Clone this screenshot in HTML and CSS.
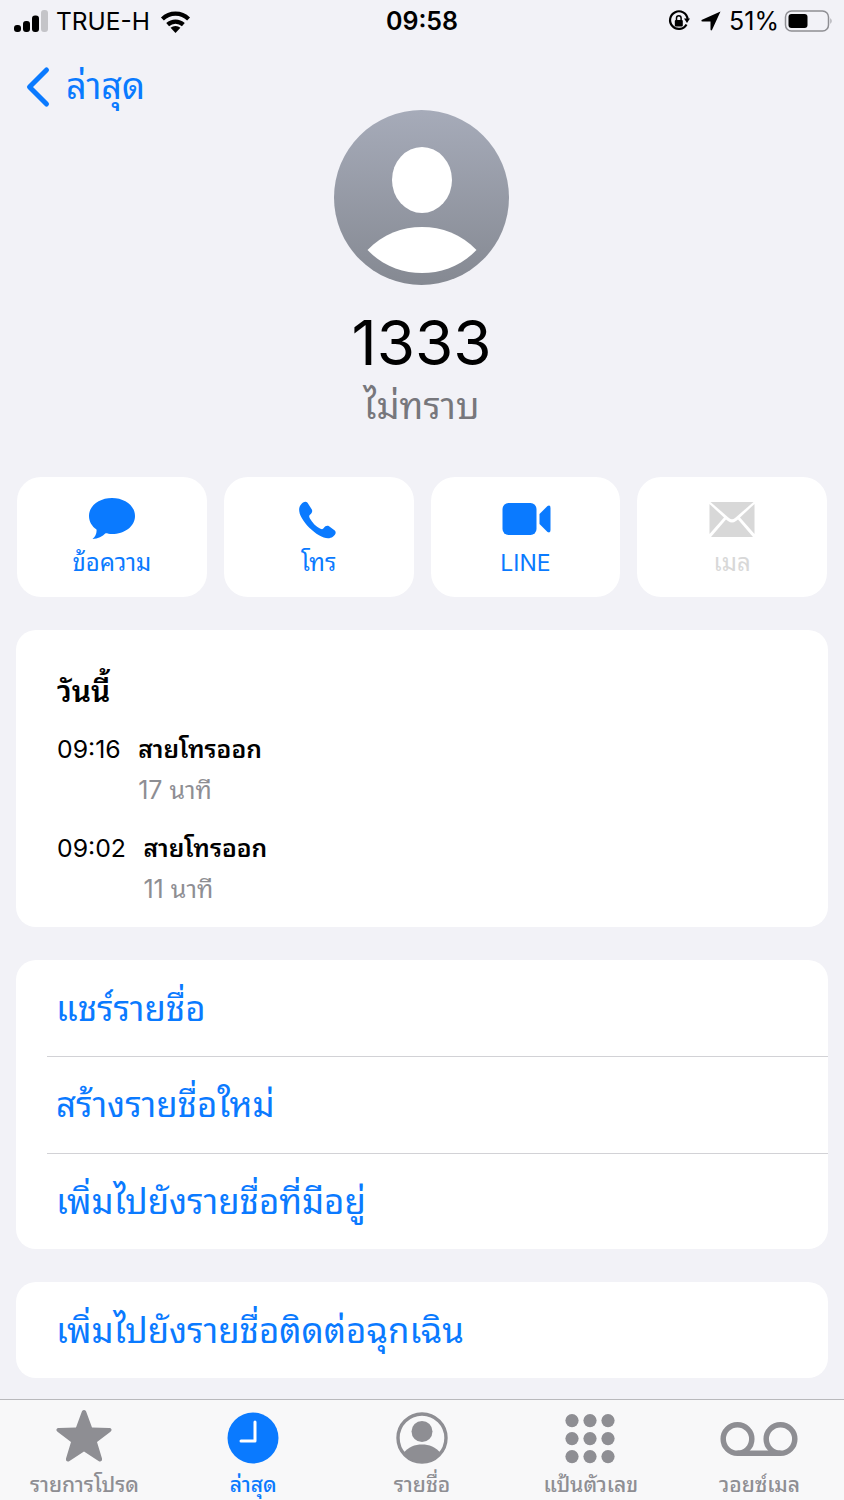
FILE: index.html
```html
<!DOCTYPE html>
<html lang="th">
<head>
  <meta charset="UTF-8">
  <meta name="viewport" content="width=device-width, initial-scale=1.0">
  <title>1333</title>
  <link rel="stylesheet" href="styles.css">
</head>
<body>
  <div class="screen">
    <!-- Status bar -->
    <header class="status">
      <div class="status-left">
        <svg class="signal" width="35" height="22" viewBox="0 0 35 22">
          <rect x="0" y="15" width="7" height="7" rx="3" fill="#000"/>
          <rect x="9" y="11" width="7" height="11" rx="3" fill="#000"/>
          <rect x="18" y="5.5" width="7" height="16.5" rx="3" fill="#000"/>
          <rect x="27" y="0" width="7" height="22" rx="3" fill="#c4c4c8"/>
        </svg>
        <span class="carrier">TRUE-H</span>
        <svg class="wifi" width="33" height="23" viewBox="0 0 31 22">
          <path d="M15.5 22 L10.8 17 A7 7 0 0 1 20.2 17 Z" fill="#000"/>
          <path d="M8 14 A11 11 0 0 1 23 14" fill="none" stroke="#000" stroke-width="4"/>
          <path d="M3 8.6 A18 18 0 0 1 28 8.6" fill="none" stroke="#000" stroke-width="4"/>
        </svg>
      </div>
      <div class="clock">09:58</div>
      <div class="status-right">
        <svg width="22" height="22" viewBox="0 0 22 22">
          <path d="M18.5 14.5 A8.8 8.8 0 1 1 19.6 9" fill="none" stroke="#000" stroke-width="2.2"/>
          <path d="M16 8.5 L22 8.5 L19 13 Z" fill="#000"/>
          <rect x="6.8" y="10" width="8" height="6.5" rx="1" fill="#000"/>
          <path d="M8.5 10 V8 A2.3 2.3 0 0 1 13.1 8 V10" fill="none" stroke="#000" stroke-width="1.5"/>
        </svg>
        <svg class="arrow" width="20" height="20" viewBox="0 0 20 20">
          <path d="M19.5 0.5 L0.5 9 Q0 10.5 1.5 10.5 L9.5 10.5 L9.5 18.5 Q10 20 11 19 Z" fill="#000"/>
        </svg>
        <span class="battery-pct">51%</span>
        <svg width="48" height="22" viewBox="0 0 48 22">
          <rect x="0.5" y="1" width="43" height="20" rx="6" fill="none" stroke="#8e8e93" stroke-width="1.5"/>
          <rect x="3.5" y="4" width="19" height="14" rx="3" fill="#000"/>
          <path d="M45.5 8 Q47.5 11 45.5 14 Z" fill="#8e8e93"/>
        </svg>
      </div>
    </header>

    <!-- Back link -->
    <nav class="back">
      <svg width="24" height="40" viewBox="0 0 24 40">
        <path d="M20.5 3 L3.5 20 L20.5 37" fill="none" stroke="#0a7aff" stroke-width="5" stroke-linecap="round" stroke-linejoin="round"/>
      </svg>
      <span class="back-label">ล่าสุด</span>
    </nav>

    <main class="content">
      <!-- Contact head -->
      <section class="contact">
        <svg class="avatar" width="175" height="175" viewBox="0 0 175 175">
          <defs>
            <linearGradient id="avatarFill" x1="0" y1="0" x2="0" y2="1">
              <stop offset="0" stop-color="#a6abb9"/>
              <stop offset="1" stop-color="#858992"/>
            </linearGradient>
          </defs>
          <circle cx="87.5" cy="87.5" r="87.5" fill="url(#avatarFill)"/>
          <ellipse cx="88" cy="70" rx="30" ry="33" fill="#fff"/>
          <path d="M33.5 140 C48.5 124 68.5 117 88 117 C107.5 117 127.5 124 142.5 140 C127.5 156 107.5 163 88 163 C68.5 163 48.5 156 33.5 140 Z" fill="#fff"/>
        </svg>
        <h1 class="number">1333</h1>
        <p class="caption">ไม่ทราบ</p>
      </section>

      <!-- Quick actions -->
      <section class="actions">
        <a class="action">
          <svg width="46" height="44" viewBox="0 0 46 44">
            <path d="M23 1 C35.5 1 46 8.5 46 19 C46 29.5 35.5 37 23 37 C20.5 37 18.5 36.8 16.5 36.2 C13.5 39.5 9 41.5 3.5 42 C6.5 39.5 8 36 7.5 32.5 C3 29.5 0 24.5 0 19 C0 8.5 10.5 1 23 1 Z" fill="#0a7aff"/>
          </svg>
          <span>ข้อความ</span>
        </a>
        <a class="action">
          <svg width="46" height="44" viewBox="1 -2 48 46">
            <path d="M6 6 C8 3.5 11 2 13 4 L17.5 11 C18.5 13 17.5 15 15.5 16.5 C14.5 17.5 14.5 18.5 15.5 20.5 C18 25 22 29 26 31 C28 32 29 32 30 30.5 C31.5 28.5 33.5 27.5 35.5 28.7 L41.5 33 C43.5 35 42 38 39.5 39.5 C36 42 31 41.5 25 38 C18 34 11 27 7 20 C3.5 14 3.5 9 6 6 Z" fill="#0a7aff"/>
          </svg>
          <span>โทร</span>
        </a>
        <a class="action">
          <svg width="50" height="44" viewBox="0 0 50 44">
            <rect x="2.5" y="6" width="34" height="32" rx="6" fill="#0a7aff"/>
            <path d="M39.5 17 L47.5 9 Q50.5 7.5 50.5 11 V33 Q50.5 36.5 47.5 35 L39.5 27 Z" fill="#0a7aff"/>
          </svg>
          <span class="action-latin">LINE</span>
        </a>
        <a class="action action-off">
          <svg width="46" height="44" viewBox="0 0 46 44">
            <path d="M1.5 5 H44.5 L26 21 Q23 23.5 20 21 Z" fill="#d8d8d8"/>
            <path d="M0.5 7 L15 20.5 L0.5 37 Z" fill="#d8d8d8"/>
            <path d="M45.5 7 L31 20.5 L45.5 37 Z" fill="#d8d8d8"/>
            <path d="M2 40 L17 22.5 L19 24 Q23 27 27 24 L29 22.5 L44 40 Z" fill="#d8d8d8"/>
          </svg>
          <span>เมล</span>
        </a>
      </section>

      <!-- Recent calls -->
      <section class="card calls">
        <h2 class="calls-day">วันนี้</h2>
        <div class="call">
          <span class="call-time">09:16</span>
          <div>
            <div class="call-type">สายโทรออก</div>
            <div class="call-length">17 นาที</div>
          </div>
        </div>
        <div class="call">
          <span class="call-time">09:02</span>
          <div>
            <div class="call-type">สายโทรออก</div>
            <div class="call-length">11 นาที</div>
          </div>
        </div>
      </section>

      <section class="card">
        <a class="row">แชร์รายชื่อ</a>
        <a class="row">สร้างรายชื่อใหม่</a>
        <a class="row">เพิ่มไปยังรายชื่อที่มีอยู่</a>
      </section>

      <section class="card">
        <a class="row">เพิ่มไปยังรายชื่อติดต่อฉุกเฉิน</a>
      </section>
    </main>

    <!-- Tab bar -->
    <footer class="tabs">
      <a class="tab">
        <svg width="58" height="54" viewBox="0 2 58 54">
          <path d="M29 1 C30.5 1 31 2 31.5 3.5 L37 18.5 L54 19 C56.5 19 57.5 21 55.5 22.8 L42 33 L47 49.5 C47.5 52 45.5 53.3 43.5 52 L29 42.5 L14.5 52 C12.5 53.3 10.5 52 11 49.5 L16 33 L2.5 22.8 C0.5 21 1.5 19 4 19 L21 18.5 L26.5 3.5 C27 2 27.5 1 29 1 Z" fill="#8e8e93"/>
        </svg>
        <span>รายการโปรด</span>
      </a>
      <a class="tab tab-on">
        <svg width="58" height="54" viewBox="0 0 58 54">
          <circle cx="29" cy="27" r="25.5" fill="#0a7aff"/>
          <path d="M31 11 V30 H17" fill="none" stroke="#fff" stroke-width="3" stroke-linecap="round" stroke-linejoin="round"/>
        </svg>
        <span>ล่าสุด</span>
      </a>
      <a class="tab">
        <svg width="58" height="54" viewBox="0 0 58 54">
          <circle cx="29" cy="27" r="24" fill="none" stroke="#8e8e93" stroke-width="3.4"/>
          <circle cx="29" cy="20.5" r="10.5" fill="#8e8e93"/>
          <path d="M10.5 42 C15 36 22 33.5 29 33.5 C36 33.5 43 36 47.5 42 C43 47.5 36 51 29 51 C22 51 15 47.5 10.5 42 Z" fill="#8e8e93"/>
        </svg>
        <span>รายชื่อ</span>
      </a>
      <a class="tab">
        <svg width="58" height="54" viewBox="1 0 58 54">
          <g fill="#8e8e93">
            <circle cx="11" cy="9.6" r="6.6"/><circle cx="29" cy="9.6" r="6.6"/><circle cx="47" cy="9.6" r="6.6"/>
            <circle cx="11" cy="27.6" r="6.6"/><circle cx="29" cy="27.6" r="6.6"/><circle cx="47" cy="27.6" r="6.6"/>
            <circle cx="11" cy="45.6" r="6.6"/><circle cx="29" cy="45.6" r="6.6"/><circle cx="47" cy="45.6" r="6.6"/>
          </g>
        </svg>
        <span>แป้นตัวเลข</span>
      </a>
      <a class="tab">
        <svg width="78" height="54" viewBox="1 0 78 54">
          <g fill="none" stroke="#8e8e93" stroke-width="5.5">
            <circle cx="17.5" cy="28" r="14.3"/>
            <circle cx="60.5" cy="28" r="14.3"/>
            <path d="M17.5 42.3 H60.5"/>
          </g>
        </svg>
        <span>วอยซ์เมล</span>
      </a>
    </footer>
  </div>
</body>
</html>
```

FILE: styles.css
```css
:root {
  --blue: #0a7aff;
  --bg: #f2f2f7;
  --gray: #8e8e93;
  --line: #d2d2d6;
}

* {
  margin: 0;
  padding: 0;
  box-sizing: border-box;
}

body {
  background-color: var(--bg);
  color: #000;
  font-family: Inter, "Noto Sans Thai Looped", "Noto Sans", sans-serif;
}

svg {
  overflow: visible;
}

.screen {
  height: 1500px;
  display: flex;
  flex-direction: column;
  overflow: hidden;
}

.status {
  height: 42px;
  padding: 0 11px 0 14px;
  display: grid;
  grid-template-columns: 1fr auto 1fr;
  align-items: center;
  font-size: 24px;
}

.status-left,
.status-right {
  display: flex;
  align-items: center;
}

.status-left {
  gap: 8px;
}

.carrier {
  font-size: 24.5px;
  margin-left: -1px;
}

.wifi {
  margin-left: 1px;
}

.status-right {
  justify-content: flex-end;
  gap: 9px;
}

.arrow {
  margin-left: 2px;
}

.battery-pct {
  font-size: 25px;
  margin-left: -1px;
  margin-right: -3px;
}

.clock {
  font-size: 25px;
  font-weight: 600;
  margin-right: 3px;
}

.back {
  height: 90px;
  padding: 0 0 0 26px;
  display: flex;
  align-items: center;
  gap: 16px;
  color: var(--blue);
  font-size: 36px;
}

.back-label {
  margin-bottom: 8px;
}

.content {
  flex: 1;
  padding: 0 16px;
  display: flex;
  flex-direction: column;
  gap: 33px;
}

.contact {
  display: flex;
  flex-direction: column;
  align-items: center;
  margin-top: -22px;
  margin-bottom: 13px;
  padding-right: 1px;
}

.number {
  margin-top: 22px;
  font-size: 62px;
  font-weight: 400;
  line-height: 72px;
}

.caption {
  margin-top: 2px;
  color: #77777c;
  font-size: 36.4px;
  line-height: 50px;
}

.actions {
  display: grid;
  grid-template-columns: repeat(4, 1fr);
  gap: 17px;
  padding: 0 1px;
}

.action {
  height: 120px;
  background-color: white;
  border-radius: 24px;
  display: flex;
  flex-direction: column;
  align-items: center;
  padding-top: 20px;
  color: var(--blue);
  font-size: 24px;
  line-height: 32px;
  gap: 6px;
}

.action-latin {
  font-size: 23px;
}

.action-off {
  color: #d8d8d8;
}

.card {
  background-color: white;
  border-radius: 20px;
}

.calls {
  height: 297px;
  padding: 39px 41px 0;
}

.calls-day {
  font-size: 30px;
  font-weight: 600;
  line-height: 44px;
}

.call {
  display: flex;
  gap: 17.5px;
  margin-top: 16px;
}

.call + .call {
  margin-top: 18px;
}

.call-time {
  font-size: 24.8px;
  line-height: 40px;
}

.call-type {
  font-size: 24.6px;
  font-weight: 600;
  line-height: 40px;
}

.call-length {
  margin-top: 1px;
  color: var(--gray);
  font-size: 25px;
  line-height: 40px;
}

.row {
  display: flex;
  align-items: center;
  height: 96.33px;
  padding: 0 0 6px 40px;
  color: var(--blue);
  font-size: 34.8px;
  position: relative;
}

.row + .row::before {
  content: '';
  position: absolute;
  top: 0;
  left: 31px;
  right: 0;
  height: 1px;
  background-color: var(--line);
}

.tabs {
  height: 101px;
  background-color: #f8f8f9;
  border-top: 1px solid #b9b9bc;
  display: grid;
  grid-template-columns: repeat(5, 1fr);
  padding: 11px 0 0;
}

.tab {
  display: flex;
  flex-direction: column;
  align-items: center;
  color: var(--gray);
  font-size: 21px;
  font-weight: 500;
  line-height: 30px;
  gap: 5px;
}

.tab-on {
  color: var(--blue);
}
```
